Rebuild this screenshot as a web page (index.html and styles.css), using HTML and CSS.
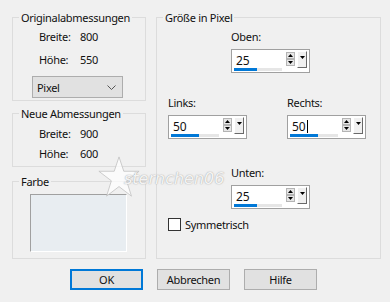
FILE: index.html
```html
<!DOCTYPE html>
<html lang="de">
<head>
<meta charset="utf-8">
<link rel="stylesheet" href="styles.css">
</head>
<body>
<div class="dialog">
  <div class="left">
    <fieldset class="group g-orig">
      <legend>Originalabmessungen</legend>
      <div class="dims dims-orig">
        <span>Breite:</span><span>800</span>
        <span>Höhe:</span><span>550</span>
      </div>
      <div class="select">
        <span>Pixel</span>
        <svg class="chev" width="9" height="5" viewBox="0 0 9 5"><path d="M0.5 0.5 L4.5 4.5 L8.5 0.5" fill="none" stroke="#555" stroke-width="1"/></svg>
      </div>
    </fieldset>
    <fieldset class="group g-new">
      <legend>Neue Abmessungen</legend>
      <div class="dims dims-new">
        <span>Breite:</span><span>900</span>
        <span>Höhe:</span><span>600</span>
      </div>
    </fieldset>
    <fieldset class="group g-color">
      <legend>Farbe</legend>
      <div class="swatch"></div>
    </fieldset>
  </div>

  <fieldset class="group g-size">
    <legend>Größe in Pixel</legend>
    <div class="field f-top">
      <span class="label">Oben:</span>
      <div class="spin">
        <div class="spin-text">
          <span class="val">25</span>
          <div class="track"><div class="fill" style="width:23px"></div></div>
        </div>
        <div class="updown">
          <span class="ud"><svg width="5" height="3" viewBox="0 0 5 3"><path d="M2.5 0 L5 3 L0 3Z" fill="#000"/></svg></span>
          <span class="ud"><svg width="5" height="3" viewBox="0 0 5 3"><path d="M0 0 L5 0 L2.5 3Z" fill="#000"/></svg></span>
        </div>
        <span class="drop"><svg width="5" height="3" viewBox="0 0 5 3"><path d="M0 0 L5 0 L2.5 3Z" fill="#000"/></svg></span>
      </div>
    </div>
    <div class="lr-row">
      <div class="field">
        <span class="label">Links:</span>
        <div class="spin">
          <div class="spin-text">
            <span class="val">50</span>
            <div class="track"><div class="fill" style="width:28px"></div></div>
          </div>
          <div class="updown">
            <span class="ud"><svg width="5" height="3" viewBox="0 0 5 3"><path d="M2.5 0 L5 3 L0 3Z" fill="#000"/></svg></span>
            <span class="ud"><svg width="5" height="3" viewBox="0 0 5 3"><path d="M0 0 L5 0 L2.5 3Z" fill="#000"/></svg></span>
          </div>
          <span class="drop"><svg width="5" height="3" viewBox="0 0 5 3"><path d="M0 0 L5 0 L2.5 3Z" fill="#000"/></svg></span>
        </div>
      </div>
      <div class="field">
        <span class="label">Rechts:</span>
        <div class="spin">
          <div class="spin-text">
            <span class="val">50<span class="caret"></span></span>
            <div class="track"><div class="fill" style="width:28px"></div></div>
          </div>
          <div class="updown">
            <span class="ud"><svg width="5" height="3" viewBox="0 0 5 3"><path d="M2.5 0 L5 3 L0 3Z" fill="#000"/></svg></span>
            <span class="ud"><svg width="5" height="3" viewBox="0 0 5 3"><path d="M0 0 L5 0 L2.5 3Z" fill="#000"/></svg></span>
          </div>
          <span class="drop"><svg width="5" height="3" viewBox="0 0 5 3"><path d="M0 0 L5 0 L2.5 3Z" fill="#000"/></svg></span>
        </div>
      </div>
    </div>
    <div class="field f-bottom">
      <span class="label">Unten:</span>
      <div class="spin">
        <div class="spin-text">
          <span class="val">25</span>
          <div class="track"><div class="fill" style="width:23px"></div></div>
        </div>
        <div class="updown">
          <span class="ud"><svg width="5" height="3" viewBox="0 0 5 3"><path d="M2.5 0 L5 3 L0 3Z" fill="#000"/></svg></span>
          <span class="ud"><svg width="5" height="3" viewBox="0 0 5 3"><path d="M0 0 L5 0 L2.5 3Z" fill="#000"/></svg></span>
        </div>
        <span class="drop"><svg width="5" height="3" viewBox="0 0 5 3"><path d="M0 0 L5 0 L2.5 3Z" fill="#000"/></svg></span>
      </div>
    </div>
    <label class="check"><span class="box"></span><span>Symmetrisch</span></label>
  </fieldset>

  <div class="buttons">
    <button class="btn btn-default">OK</button>
    <button class="btn">Abbrechen</button>
    <button class="btn">Hilfe</button>
  </div>

  <div class="watermark">
    <svg class="wm-star" width="44" height="44" viewBox="0 0 46 46"><path d="M23 2 L28 17 L44 17 L31 27 L36 43 L23 33 L10 43 L15 27 L2 17 L18 17Z" fill="rgba(255,255,255,0.7)" stroke="rgba(190,190,190,0.8)" stroke-width="1"/></svg>
    <span class="wm-text">sternchen06</span>
  </div>
</div>
</body>
</html>
```
FILE: styles.css
```css
* { box-sizing: border-box; }
html, body { margin: 0; padding: 0; background: #f0f0f0; }
body {
  font-family: "Noto Sans", "Liberation Sans", Arial, sans-serif;
  font-size: 11px;
  line-height: 15px;
  letter-spacing: -0.3px;
  color: #111;
}
.dialog {
  position: relative;
  width: 390px;
  height: 302px;
  display: grid;
  grid-template-columns: 134px 225px;
  grid-template-rows: 249px auto;
  column-gap: 10px;
  padding: 10px 0 0 12px;
}
.left { display: flex; flex-direction: column; }
.group {
  margin: 0;
  padding: 0;
  min-width: 0;
  border: 1px solid #dcdcdc;
}
.group legend {
  padding: 0 2px;
  margin-left: 6px;
  line-height: 15px;
}
.g-orig { height: 91px; }
.g-new { height: 61px; margin-top: 5px; }
.g-color { height: 85px; margin-top: 7px; }

.dims {
  display: grid;
  grid-template-columns: 41px auto;
  padding-left: 26px;
}
.dims-orig { margin-top: 4px; row-gap: 8px; }
.dims-new { margin-top: 5px; row-gap: 5px; }

.select {
  margin: 9px 0 0 19px;
  width: 91px;
  height: 22px;
  background: #e1e1e1;
  border: 1px solid #adadad;
  display: flex;
  align-items: center;
  justify-content: space-between;
  padding: 0 6px 0 4px;
}
.chev { display: block; }

.swatch {
  margin: 5px 0 0 17px;
  width: 97px;
  height: 58px;
  background: #e8edf1;
  border-top: 1px solid #a0a0a0;
  border-left: 1px solid #a0a0a0;
  border-right: 1px solid #fff;
  border-bottom: 1px solid #fff;
}

.g-size { height: 249px; }
.field { display: flex; flex-direction: column; gap: 5px; align-items: flex-start; }
.f-top { margin: 4px 0 0 74px; }
.lr-row { display: flex; gap: 40px; margin: 22px 0 0 11px; }
.f-bottom { margin: 26px 0 0 74px; }
.label { display: block; }

.spin {
  width: 79px;
  height: 24px;
  background: #fff;
  border: 1px solid #a0a0a0;
  display: flex;
  align-items: flex-start;
  padding: 1px 2px 0 2px;
}
.spin-text {
  flex: 1;
  display: flex;
  flex-direction: column;
}
.val { display: flex; align-items: center; padding-left: 2px; height: 15px; margin-top: 2px; font-size: 12px; letter-spacing: 0; }
.caret { display: inline-block; width: 1px; height: 13px; background: #000; margin-left: 1px; }
.track { margin-top: 0; width: 48px; height: 3px; background: #e6e6e6; }
.fill { height: 3px; background: #0078d7; }
.updown {
  display: flex;
  flex-direction: column;
  margin-top: 1px;
}
.ud {
  width: 9px;
  height: 7px;
  background: #e6e6e6;
  border: 1px solid #b4b4b4;
  display: flex;
  align-items: center;
  justify-content: center;
}
.ud svg, .drop svg { display: block; }
.drop {
  width: 10px;
  height: 17px;
  margin-left: 2px;
  background: #f0f0f0;
  border-top: 1px solid #fff;
  border-left: 1px solid #fff;
  border-right: 1px solid #696969;
  border-bottom: 1px solid #696969;
  display: flex;
  justify-content: center;
  padding-top: 4px;
}

.check { display: flex; align-items: center; gap: 4px; margin: 8px 0 0 11px; }
.box { width: 13px; height: 13px; border: 1px solid #333; background: #fff; }

.buttons {
  grid-column: 1 / span 2;
  display: flex;
  gap: 14px;
  padding-left: 58px;
  margin-top: 10px;
  align-items: flex-start;
}
.btn {
  width: 73px;
  height: 21px;
  margin: 0;
  padding: 0;
  font: inherit;
  letter-spacing: inherit;
  color: #111;
  background: #e1e1e1;
  border: 1px solid #adadad;
}
.btn-default { border: 2px solid #0078d7; }

.watermark {
  position: absolute;
  left: 97px;
  top: 155px;
  display: flex;
  align-items: center;
  pointer-events: none;
}
.wm-star { display: block; }
.wm-text {
  margin-left: -17px;
  margin-top: 3px;
  font-family: "DejaVu Sans", sans-serif;
  font-style: italic;
  font-size: 16px;
  letter-spacing: 0;
  color: rgba(255,255,255,0.9);
  text-shadow: 0 0 1px rgba(150,150,150,0.9), 0 0 2px rgba(190,190,190,0.6);
}
```
